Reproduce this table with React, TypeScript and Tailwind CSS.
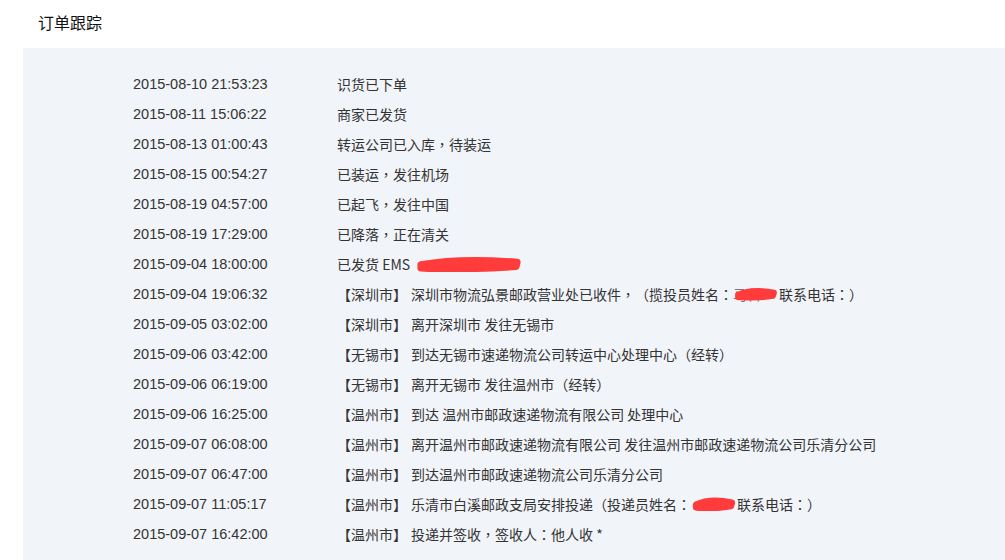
import React from "react";

const cn = '"Noto Sans CJK SC", "Liberation Sans", sans-serif';

// full-width punctuation sits centred in the reference, the TC cut does that
function Txt({ s }: { s: string }) {
    const parts = s.split(/([，：（）])/);
    return (
        <>
            {parts.map((p, i) =>
                /^[，：（）]$/.test(p) ? (
                    <span key={i} style={{ fontFamily: '"Noto Sans CJK TC", sans-serif' }}>
                        {p}
                    </span>
                ) : (
                    <React.Fragment key={i}>{p}</React.Fragment>
                )
            )}
        </>
    );
}

function Scribble({ w, h }: { w: number; h: number }) {
    return (
        <svg width={w} height={h} viewBox={`0 0 ${w} ${h}`} className="absolute left-0 top-1/2 -translate-y-1/2">
            <path
                d={`M5 ${h * 0.55} C ${w * 0.3} ${h * 0.25}, ${w * 0.6} ${h * 0.2}, ${w - 5} ${h * 0.4} L ${w - 6} ${h * 0.65} C ${w * 0.6} ${h * 0.8}, ${w * 0.3} ${h * 0.85}, 5 ${h * 0.75} Z`}
                fill="#ff3b3b"
                stroke="#ff3b3b"
                strokeWidth={h * 0.45}
                strokeLinejoin="round"
                strokeLinecap="round"
            />
        </svg>
    );
}

function Hidden({ text, w, h = 14 }: { text: string; w: number; h?: number }) {
    return (
        <span className="relative inline-block overflow-visible" style={{ width: w }}>
            <span className="text-[#777]">{text}</span>
            <Scribble w={w} h={h} />
        </span>
    );
}

type Row = { time: string; city?: string; text: React.ReactNode };

const rows: Row[] = [
    { time: "2015-08-10 21:53:23", text: "识货已下单" },
    { time: "2015-08-11 15:06:22", text: "商家已发货" },
    { time: "2015-08-13 01:00:43", text: "转运公司已入库，待装运" },
    { time: "2015-08-15 00:54:27", text: "已装运，发往机场" },
    { time: "2015-08-19 04:57:00", text: "已起飞，发往中国" },
    { time: "2015-08-19 17:29:00", text: "已降落，正在清关" },
    {
        time: "2015-09-04 18:00:00",
        text: (
            <>
                <span className="mr-1.5">已发货 EMS</span>
                <Hidden text="" w={106} h={16} />
            </>
        ),
    },
    {
        time: "2015-09-04 19:06:32",
        city: "深圳市",
        text: (
            <>
                <Txt s="深圳市物流弘景邮政营业处已收件，（揽投员姓名：" />
                <Hidden text="马科" w={46} h={13} />
                <Txt s="联系电话：）" />
            </>
        ),
    },
    { time: "2015-09-05 03:02:00", city: "深圳市", text: "离开深圳市 发往无锡市" },
    { time: "2015-09-06 03:42:00", city: "无锡市", text: "到达无锡市速递物流公司转运中心处理中心（经转）" },
    { time: "2015-09-06 06:19:00", city: "无锡市", text: "离开无锡市 发往温州市（经转）" },
    { time: "2015-09-06 16:25:00", city: "温州市", text: "到达 温州市邮政速递物流有限公司 处理中心" },
    { time: "2015-09-07 06:08:00", city: "温州市", text: "离开温州市邮政速递物流有限公司 发往温州市邮政速递物流公司乐清分公司" },
    { time: "2015-09-07 06:47:00", city: "温州市", text: "到达温州市邮政速递物流公司乐清分公司" },
    {
        time: "2015-09-07 11:05:17",
        city: "温州市",
        text: (
            <>
                <Txt s="乐清市白溪邮政支局安排投递（投递员姓名：" />
                <Hidden text="" w={46} h={14} />
                <Txt s="联系电话：）" />
            </>
        ),
    },
    { time: "2015-09-07 16:42:00", city: "温州市", text: "投递并签收，签收人：他人收 *" },
];

export default function App() {
    return (
        <div className="w-[1005px] h-[560px] bg-white overflow-hidden" style={{ fontFamily: cn }}>
            <div className="h-12 pl-[38px] flex items-center">
                <h2 className="text-[16px] text-[#111] leading-none pb-1">订单跟踪</h2>
            </div>
            <div className="ml-[23px] bg-[#f1f4f9] h-[512px] pt-[21px] pl-[110px]">
                {rows.map((r) => (
                    <div key={r.time} className="flex h-[30px] items-center text-[14px] text-[#333] whitespace-nowrap">
                        <span className="w-[204px] text-[14.5px] pt-px" style={{ fontFamily: '"Liberation Sans", sans-serif' }}>
                            {r.time}
                        </span>
                        <span className="flex items-center">
                            {r.city && <span className="mr-1">【{r.city}】</span>}
                            {typeof r.text === "string" ? <Txt s={r.text} /> : r.text}
                        </span>
                    </div>
                ))}
            </div>
        </div>
    );
}
